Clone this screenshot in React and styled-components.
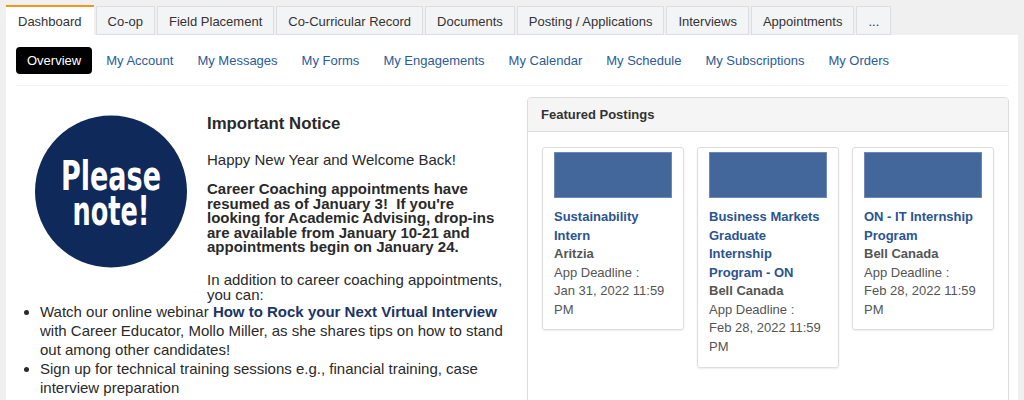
import React from 'react'
import styled, { createGlobalStyle } from 'styled-components'

const GlobalStyle = createGlobalStyle`
  body {
    margin: 0;
    background: #f0f0f0;
    font-family: "Liberation Sans", Arial, sans-serif;
    color: #333;
  }
`

const Page = styled.div`
  padding: 5px 6px 0;
  height: 395px;
  overflow: hidden;
`

const TabBar = styled.div`
  display: flex;
  align-items: flex-end;
  gap: 2px;
`

const Tab = styled.div`
  display: flex;
  align-items: center;
  box-sizing: border-box;
  font-size: 13px;
  color: #333;
  height: ${p => (p.$active ? '30px' : '29px')};
  padding: ${p => (p.$active ? '0 12px' : '1px 11px 0')};
  background: ${p => (p.$active ? '#fff' : '#f3f4f6')};
  border: ${p => (p.$active ? 'none' : '1px solid #dcdee2')};
  border-top: ${p => (p.$active ? '2px solid #f7941d' : '1px solid #dcdee2')};
`

const Content = styled.div`
  background: #fff;
  padding: 12px 9px 0 10px;
  height: 400px;
`

const SubNav = styled.div`
  display: flex;
  align-items: center;
  padding-bottom: 11px;
  border-bottom: 1px solid #f1f1f1;
`

const SubLink = styled.a`
  display: flex;
  align-items: center;
  height: 27px;
  font-size: 13px;
  padding: 0 ${p => (p.$active ? '11px' : '12px')};
  margin-right: ${p => (p.$active ? '2px' : '0')};
  border-radius: 4px;
  background: ${p => (p.$active ? '#000' : 'transparent')};
  color: ${p => (p.$active ? '#fff' : '#2c5b97')};
  text-decoration: none;
`

const Columns = styled.div`
  display: grid;
  grid-template-columns: 499px 1fr;
  gap: 12px;
  margin-top: 11px;
`

const Notice = styled.div`
  padding-top: 18px;
  font-size: 15px;
  color: #2a2a2a;
`

const NoticeRow = styled.div`
  display: flex;
  align-items: flex-start;
`

const Badge = styled.svg`
  flex: none;
  margin: 0 20px 0 19px;
`

const NoticeText = styled.div`
  width: 296px;
`

const NoticeTitle = styled.h3`
  margin: 0;
  font-size: 16.8px;
  line-height: 18px;
  font-weight: bold;
`

const Para = styled.p`
  margin: ${p => p.$gap || 0}px 0 0;
  line-height: ${p => (p.$bold ? '14.6px' : '15px')};
  font-weight: ${p => (p.$bold ? 'bold' : 'normal')};
`

const List = styled.ul`
  margin: 0;
  padding-left: 24px;
  line-height: 19px;
`

const StrongLink = styled.a`
  color: #1b3567;
  font-weight: bold;
  text-decoration: none;
`

const Panel = styled.div`
  border: 1px solid #ddd;
  border-radius: 4px;
  overflow: hidden;
`

const PanelHeader = styled.div`
  display: flex;
  align-items: center;
  box-sizing: border-box;
  height: 34px;
  padding: 0 13px;
  background: #f5f5f5;
  border-bottom: 1px solid #ddd;
  font-size: 13px;
  font-weight: bold;
  color: #333;
`

const PanelBody = styled.div`
  display: flex;
  align-items: flex-start;
  gap: 13px;
  padding: 15px 14px;
  min-height: 300px;
`

const Card = styled.div`
  box-sizing: border-box;
  width: 142px;
  padding: 4px 11px 10px;
  border: 1px solid #ddd;
  border-radius: 3px;
  box-shadow: 0 1px 2px rgba(0, 0, 0, 0.08);
  font-size: 13px;
  line-height: 18.57px;
  color: #555;
`

const Logo = styled.div`
  box-sizing: border-box;
  height: 46px;
  background: #43679a;
  border: 1px solid #6d89b3;
  margin-bottom: 10px;
`

const CardTitle = styled.a`
  display: block;
  color: #2b5491;
  font-weight: bold;
  text-decoration: none;
`

const Company = styled.div`
  font-weight: bold;
`

const tabs = ['Dashboard', 'Co-op', 'Field Placement', 'Co-Curricular Record', 'Documents', 'Posting / Applications', 'Interviews', 'Appointments', '...']
const links = ['Overview', 'My Account', 'My Messages', 'My Forms', 'My Engagements', 'My Calendar', 'My Schedule', 'My Subscriptions', 'My Orders']

const postings = [
  { title: 'Sustainability Intern', company: 'Aritzia', deadline: 'Jan 31, 2022 11:59 PM' },
  { title: 'Business Markets Graduate Internship Program - ON', company: 'Bell Canada', deadline: 'Feb 28, 2022 11:59 PM' },
  { title: 'ON - IT Internship Program', company: 'Bell Canada', deadline: 'Feb 28, 2022 11:59 PM' },
]

const PleaseNote = () => (
  <Badge width="152" height="153" viewBox="0 0 152 153">
    <circle cx="76" cy="76.5" r="76" fill="#0f2a5a" />
    <text x="76" y="75" textAnchor="middle" fill="#fff" fontFamily="'Liberation Sans Narrow', 'DejaVu Sans Condensed', sans-serif" fontWeight="bold" fontSize="41" textLength="100" lengthAdjust="spacingAndGlyphs">Please</text>
    <text x="76" y="110" textAnchor="middle" fill="#fff" fontFamily="'Liberation Sans Narrow', 'DejaVu Sans Condensed', sans-serif" fontWeight="bold" fontSize="41" textLength="77" lengthAdjust="spacingAndGlyphs">note!</text>
  </Badge>
)

const App = () => {
  return (
    <Page>
      <GlobalStyle />
      <TabBar>
        {tabs.map((t, i) => <Tab key={t} $active={i === 0}>{t}</Tab>)}
      </TabBar>
      <Content>
        <SubNav>
          {links.map((l, i) => <SubLink key={l} $active={i === 0}>{l}</SubLink>)}
        </SubNav>
        <Columns>
          <Notice>
            <NoticeRow>
              <PleaseNote />
              <NoticeText>
                <NoticeTitle>Important Notice</NoticeTitle>
                <Para $gap={19}>Happy New Year and Welcome Back!</Para>
                <Para $gap={15} $bold>
                  Career Coaching appointments have resumed as of January 3!&nbsp; If you're looking for Academic Advising, drop-ins are available from January 10-21 and appointments begin on January 24.
                </Para>
                <Para $gap={17}>In addition to career coaching appointments, you can:</Para>
              </NoticeText>
            </NoticeRow>
            <List>
              <li>Watch our online webinar <StrongLink>How to Rock your Next Virtual Interview</StrongLink> with Career Educator, Mollo Miller, as she shares tips on how to stand out among other candidates!</li>
              <li>Sign up for technical training sessions e.g., financial training, case interview preparation</li>
            </List>
          </Notice>
          <Panel>
            <PanelHeader>Featured Postings</PanelHeader>
            <PanelBody>
              {postings.map(p => (
                <Card key={p.title}>
                  <Logo />
                  <CardTitle>{p.title}</CardTitle>
                  <Company>{p.company}</Company>
                  <div>App Deadline :</div>
                  <div>{p.deadline}</div>
                </Card>
              ))}
            </PanelBody>
          </Panel>
        </Columns>
      </Content>
    </Page>
  )
}

export default App
